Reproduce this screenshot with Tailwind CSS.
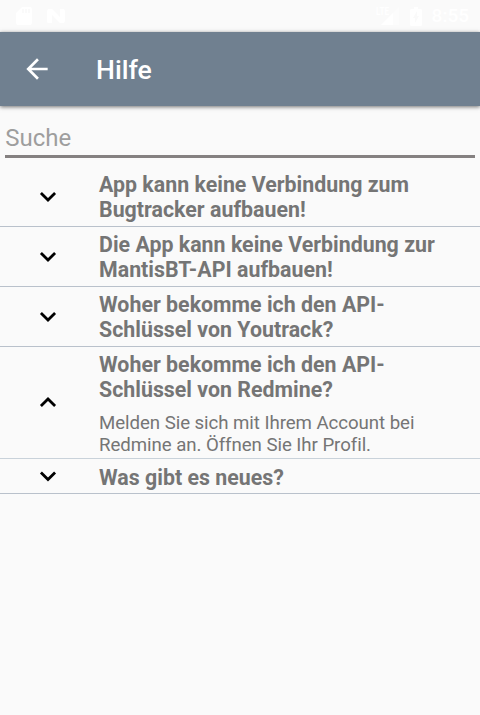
<!DOCTYPE html>
<html lang="de">
<head>
<meta charset="utf-8">
<title>Hilfe</title>
<script src="https://cdn.jsdelivr.net/npm/@tailwindcss/browser@4"></script>
</head>
<body class="bg-[#fafafa] w-[480px] h-[715px] overflow-hidden font-[Roboto,sans-serif] text-[#757575]">
<div class="h-8 flex items-center justify-between pl-4 pr-[11px] text-white">
  <div class="flex items-center gap-[14px]">
    <svg class="w-4 h-[18px]" viewBox="0 0 16 18" fill="currentColor"><path fill-rule="evenodd" d="M6 0h8a2 2 0 0 1 2 2v14a2 2 0 0 1-2 2H2a2 2 0 0 1-2-2V6zM6 2v4h2V2zM9 2v4h2V2zM12 2v4h2V2z"/></svg>
    <svg class="w-5 h-4" viewBox="0 0 20 16" fill="currentColor"><path d="M1 14V3q0-2 2-2h3l8 8V1h3q2 0 2 2v10q0 2-2 2h-3L6 7v8H2z"/></svg>
  </div>
  <div class="flex items-center">
    <svg class="w-6 h-5" viewBox="0 0 24 20" fill="currentColor"><path d="M5 19 17 7v12z"/><path fill-opacity=".4" d="M17 7l6-6v18h-6z"/><text x="0" y="9" font-size="10" font-weight="700" textLength="13" lengthAdjust="spacingAndGlyphs">LTE</text></svg>
    <svg class="ml-[10px] w-3 h-[19px]" viewBox="0 0 12 19" fill="currentColor"><path fill-rule="evenodd" d="M4 0h4v2h3l1 1v15l-1 1H1l-1-1V3l1-1h3zM7 4l-4 7h2v5l4-7H7z"/></svg>
    <span class="ml-[10px] text-[19px] leading-8 font-medium">8:55</span>
  </div>
</div>
<header class="relative h-[74px] flex items-center bg-[#708090] text-white shadow-[0_1px_4px_rgba(0,0,0,0.55)]">
  <svg class="ml-[21px] w-8 h-8" viewBox="0 0 24 24" fill="currentColor"><path d="M20 11H7.83l5.59-5.59L12 4l-8 8 8 8 1.41-1.41L7.83 13H20v-2z"/></svg>
  <h1 class="ml-[43px] pt-[2px] text-[26.67px] leading-8 font-medium">Hilfe</h1>
</header>
<div class="mx-[5.33px] h-[52px] pt-[16px] border-b-3 border-[#858181] text-[24px] leading-8 text-[#9e9e9e]">Suche</div>
<main class="pt-[9px]">
  <section class="flex items-center h-[60px] border-b border-[#b9c1cb]">
    <svg class="ml-8 w-8 h-8 shrink-0" viewBox="0 0 24 24"><path d="m6.7 9 5.3 5.2L17.3 9" fill="none" stroke="#000" stroke-width="2.1"/></svg>
    <h2 class="ml-[35px] tracking-[0.02px] text-[21.33px] leading-[25px] font-bold">App kann keine Verbindung zum<br>Bugtracker aufbauen!</h2>
  </section>
  <section class="flex items-center h-[60px] border-b border-[#b9c1cb]">
    <svg class="ml-8 w-8 h-8 shrink-0" viewBox="0 0 24 24"><path d="m6.7 9 5.3 5.2L17.3 9" fill="none" stroke="#000" stroke-width="2.1"/></svg>
    <h2 class="ml-[35px] tracking-[0.02px] text-[21.33px] leading-[25px] font-bold">Die App kann keine Verbindung zur<br>MantisBT-API aufbauen!</h2>
  </section>
  <section class="flex items-center h-[60px] border-b border-[#b9c1cb]">
    <svg class="ml-8 w-8 h-8 shrink-0" viewBox="0 0 24 24"><path d="m6.7 9 5.3 5.2L17.3 9" fill="none" stroke="#000" stroke-width="2.1"/></svg>
    <h2 class="ml-[35px] tracking-[0.02px] text-[21.33px] leading-[25px] font-bold">Woher bekomme ich den API-<br>Schlüssel von Youtrack?</h2>
  </section>
  <section class="flex items-center h-[112px] border-b border-[#c9d2da]">
    <svg class="ml-8 w-8 h-8 shrink-0" viewBox="0 0 24 24"><path d="M6.7 14.2 12 9l5.3 5.2" fill="none" stroke="#000" stroke-width="2.1"/></svg>
    <div class="ml-[35px]">
      <h2 class="pt-[2px] tracking-[0.02px] text-[21.33px] leading-[25px] font-bold">Woher bekomme ich den API-<br>Schlüssel von Redmine?</h2>
      <p class="mt-[10px] tracking-[-0.06px] text-[18.67px] leading-[22px]">Melden Sie sich mit Ihrem Account bei<br>Redmine an. Öffnen Sie Ihr Profil.</p>
    </div>
  </section>
  <section class="flex items-center h-[35px] border-b border-[#b9c1cb]">
    <svg class="ml-8 w-8 h-8 shrink-0" viewBox="0 0 24 24"><path d="m6.7 9.3 5.3 5.3 5.3-5.3" fill="none" stroke="#000" stroke-width="2.1"/></svg>
    <h2 class="ml-[35px] pt-[2px] tracking-[0.02px] text-[21.33px] leading-[25px] font-bold">Was gibt es neues?</h2>
  </section>
</main>
</body>
</html>
